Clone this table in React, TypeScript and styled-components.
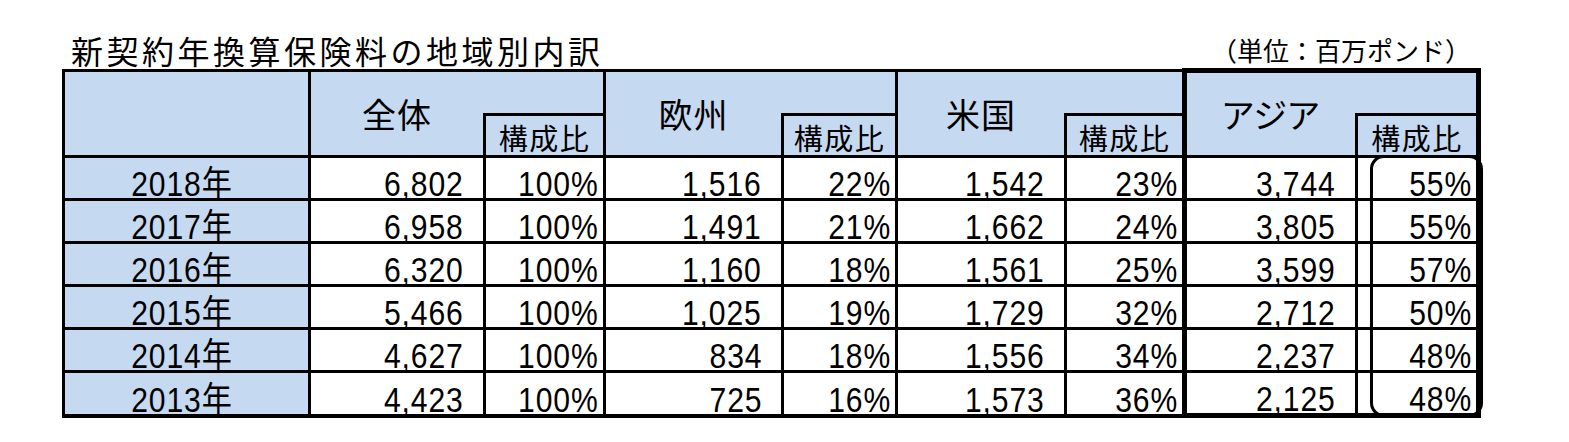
import styled, { createGlobalStyle } from 'styled-components'

const GlobalStyle = createGlobalStyle`
  body {
    margin: 0;
    background: #ffffff;
    color: #000000;
    font-family: "Liberation Sans", "Noto Sans CJK JP", sans-serif;
  }
`

const BLUE = '#c5d9f1'
const CJK = '"Noto Sans CJK JP", "Liberation Sans", sans-serif'
const NUM = '"Liberation Sans", "Noto Sans CJK JP", sans-serif'

type Region = { label: string; asia?: boolean }

const regions: Region[] = [
  { label: '全体' },
  { label: '欧州' },
  { label: '米国' },
  { label: 'アジア', asia: true },
]

const rows = [
  { year: '2018年', cells: ['6,802', '100%', '1,516', '22%', '1,542', '23%', '3,744', '55%'] },
  { year: '2017年', cells: ['6,958', '100%', '1,491', '21%', '1,662', '24%', '3,805', '55%'] },
  { year: '2016年', cells: ['6,320', '100%', '1,160', '18%', '1,561', '25%', '3,599', '57%'] },
  { year: '2015年', cells: ['5,466', '100%', '1,025', '19%', '1,729', '32%', '2,712', '50%'] },
  { year: '2014年', cells: ['4,627', '100%', '834', '18%', '1,556', '34%', '2,237', '48%'] },
  { year: '2013年', cells: ['4,423', '100%', '725', '16%', '1,573', '36%', '2,125', '48%'] },
]

const colWidths = [246, 175, 120, 178, 114, 169, 119, 172, 122]

const Page = styled.div`
  padding: 31px 0 0 62px;
`

const TitleBar = styled.div`
  display: flex;
  justify-content: space-between;
  align-items: flex-end;
  width: 1419px;
  height: 37px;
`

const Title = styled.h1`
  margin: 0;
  padding-left: 9px;
  font-family: ${CJK};
  font-weight: 400;
  font-size: 32px;
  line-height: 36px;
  letter-spacing: 3.5px;
`

const Unit = styled.span`
  margin-right: 10px;
  font-family: ${CJK};
  font-size: 26px;
  line-height: 36px;
`

const TableWrap = styled.div`
  position: relative;
  width: max-content;
`

const Sheet = styled.table`
  border-collapse: collapse;
  table-layout: fixed;
  width: 1419px;
`

const Col = styled.col<{ $w: number }>`
  width: ${(p) => p.$w}px;
`

const Row = styled.tr<{ $h: number }>`
  height: ${(p) => p.$h}px;
`

const CornerCell = styled.th`
  background: ${BLUE};
  border: 3px solid #000;
`

const GroupCell = styled.th<{ $asia?: boolean }>`
  background: ${BLUE};
  border-top: ${(p) => (p.$asia ? 5 : 3)}px solid #000;
  border-left: ${(p) => (p.$asia ? 5 : 3)}px solid #000;
  border-bottom: 3px solid #000;
  border-right: none;
  padding: 0;
  vertical-align: middle;
  text-align: center;
  font-family: ${CJK};
  font-weight: 400;
  font-size: 34px;
  line-height: 34px;
  letter-spacing: 1px;
  font-feature-settings: 'palt';
`

const GapCell = styled.th<{ $asia?: boolean }>`
  background: ${BLUE};
  border-top: ${(p) => (p.$asia ? 5 : 3)}px solid #000;
  border-right: ${(p) => (p.$asia ? 5 : 3)}px solid #000;
  border-bottom: 3px solid #000;
  border-left: none;
  padding: 0;
`

const RatioHead = styled.th<{ $asia?: boolean }>`
  background: ${BLUE};
  border: 3px solid #000;
  border-right-width: ${(p) => (p.$asia ? 5 : 3)}px;
  padding: 0 0 3px;
  vertical-align: bottom;
  text-align: center;
  font-family: ${CJK};
  font-weight: 400;
  font-size: 29px;
  line-height: 29px;
  letter-spacing: 1.5px;
`

const YearCell = styled.td<{ $last?: boolean }>`
  background: ${BLUE};
  border: 3px solid #000;
  border-bottom-width: ${(p) => (p.$last ? 4 : 3)}px;
  padding: 0 10px 0 0;
  vertical-align: bottom;
  text-align: center;
  font-family: ${NUM};
  font-size: 35px;
  line-height: 28px;
`

const NumCell = styled.td<{ $ratio?: boolean; $asia?: boolean; $last?: boolean }>`
  background: #ffffff;
  border: 3px solid #000;
  border-left-width: ${(p) => (p.$asia && !p.$ratio ? 5 : 3)}px;
  border-right-width: ${(p) => (p.$asia && p.$ratio ? 5 : 3)}px;
  border-bottom-width: ${(p) => (p.$last ? (p.$asia ? 5 : 4) : 3)}px;
  padding: 0 ${(p) => (p.$ratio ? 4 : 19)}px 0 0;
  vertical-align: bottom;
  text-align: right;
  font-family: ${NUM};
  font-size: 35px;
  line-height: 28px;
  white-space: nowrap;
`

/* the sheet's figures are in a tall, narrow face: squeeze the installed sans */
const Figure = styled.span<{ $origin?: 'right' | 'center' }>`
  display: inline-block;
  letter-spacing: 1px;
  transform: scaleX(0.86);
  transform-origin: ${(p) => p.$origin ?? 'right'} center;
`

const Bracket = styled.div`
  position: absolute;
  left: 1308px;
  top: 87px;
  width: 113px;
  height: 262px;
  box-sizing: border-box;
  border: 3px solid #000;
  border-radius: 14px;
  box-shadow: 0 4px 3px -1px rgba(0, 0, 0, 0.14);
  pointer-events: none;
`

export default function App() {
  return (
    <>
      <GlobalStyle />
      <Page>
        <TitleBar>
          <Title>新契約年換算保険料の地域別内訳</Title>
          <Unit>（単位：百万ポンド）</Unit>
        </TitleBar>
        <TableWrap>
          <Sheet>
            <colgroup>
              {colWidths.map((w, i) => (
                <Col key={i} $w={w} />
              ))}
            </colgroup>
            <thead>
              <Row $h={44}>
                <CornerCell rowSpan={2} />
                {regions.map((r) => [
                  <GroupCell key={r.label} rowSpan={2} $asia={r.asia}>
                    {r.label}
                  </GroupCell>,
                  <GapCell key={r.label + '-gap'} $asia={r.asia} />,
                ])}
              </Row>
              <Row $h={42}>
                {regions.map((r) => (
                  <RatioHead key={r.label} $asia={r.asia}>
                    構成比
                  </RatioHead>
                ))}
              </Row>
            </thead>
            <tbody>
              {rows.map((row, ri) => {
                const last = ri === rows.length - 1
                return (
                  <Row key={row.year} $h={last ? 44 : 43}>
                    <YearCell $last={last}>
                      <Figure $origin="center">{row.year}</Figure>
                    </YearCell>
                    {row.cells.map((c, ci) => (
                      <NumCell
                        key={ci}
                        $ratio={ci % 2 === 1}
                        $asia={ci >= 6}
                        $last={last}
                      >
                        <Figure>{c}</Figure>
                      </NumCell>
                    ))}
                  </Row>
                )
              })}
            </tbody>
          </Sheet>
          <Bracket />
        </TableWrap>
      </Page>
    </>
  )
}
